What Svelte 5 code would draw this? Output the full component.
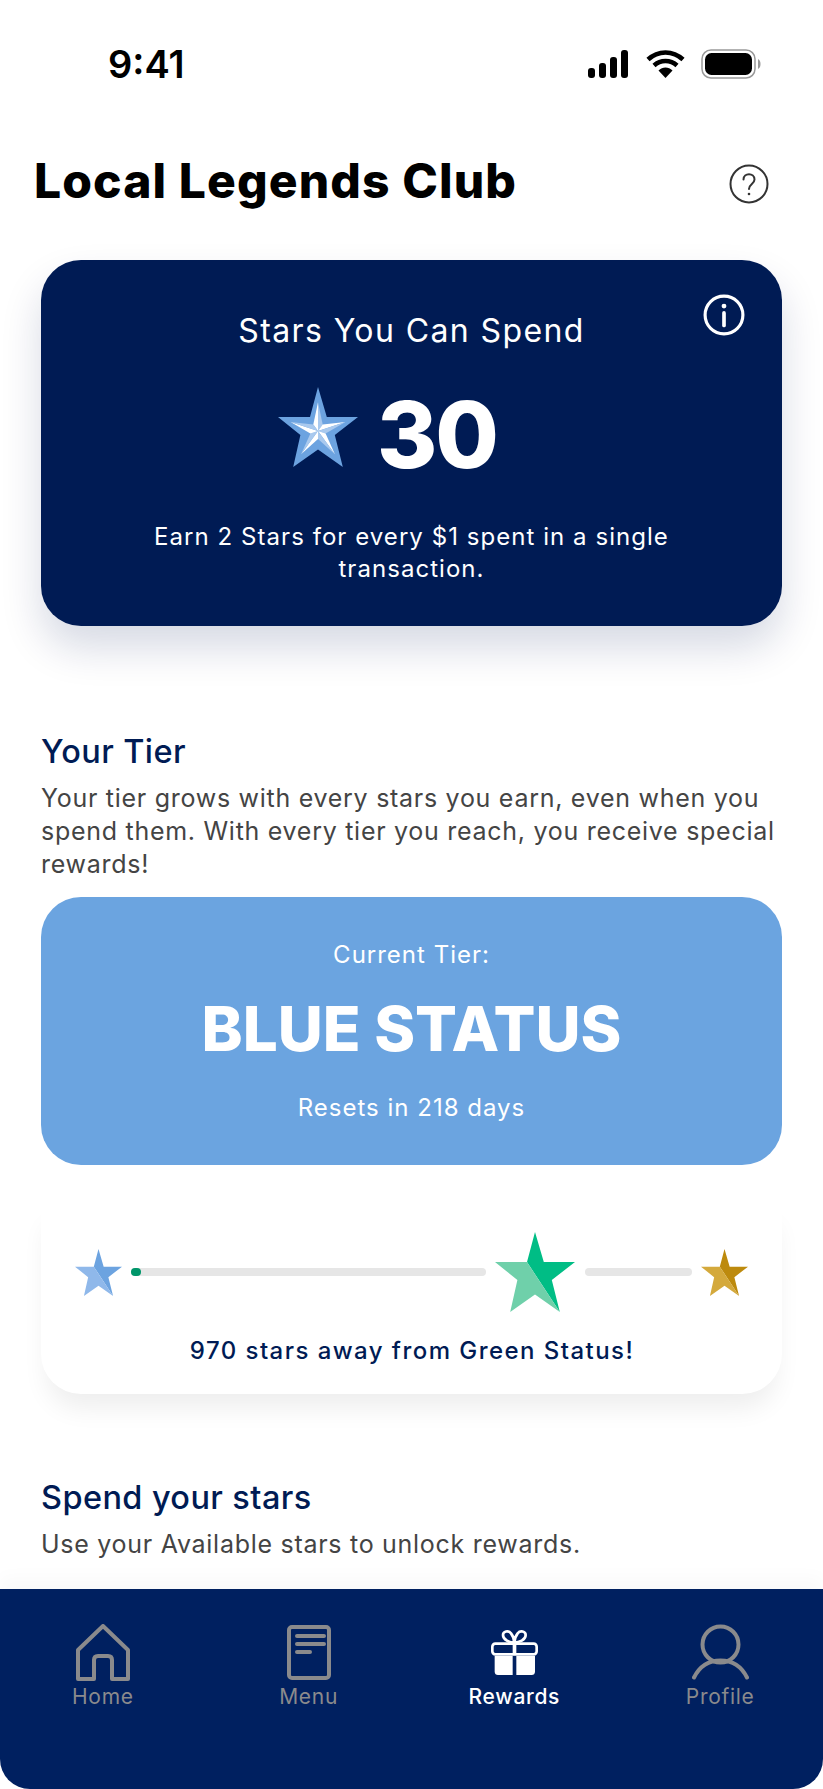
<script>
	const tiers = {
		blue: { dark: '#6ca3e0', light: '#8fb8ea' },
		green: { dark: '#00bd85', light: '#6fd0aa' },
		gold: { dark: '#bd8a0d', light: '#d4a93c' }
	};

	// facets of the white star inside the balance badge
	const cx = 50;
	const cy = 55;
	const facets = [];
	for (let i = 0; i < 5; i++) {
		const a = (-90 + i * 72) * (Math.PI / 180);
		const left = a - (36 * Math.PI) / 180;
		const right = a + (36 * Math.PI) / 180;
		const tip = [cx + 36 * Math.cos(a), cy + 36 * Math.sin(a)];
		const l = [cx + 10 * Math.cos(left), cy + 10 * Math.sin(left)];
		const r = [cx + 10 * Math.cos(right), cy + 10 * Math.sin(right)];
		facets.push({ fill: '#ffffff', points: `${cx},${cy} ${l} ${tip}` });
		facets.push({ fill: '#a9c9ee', points: `${cx},${cy} ${tip} ${r}` });
	}
</script>

{#snippet star(tier, cls)}
	<svg class={cls} viewBox="0 0 100 100">
		<polygon fill={tiers[tier].dark} points="50,0 61,37.5 100,37.5 71,60 81,100 40,37.5" />
		<polygon fill={tiers[tier].light} points="40,37.5 81,100 50,78 19,100 28,60 0,37.5" />
	</svg>
{/snippet}

<div class="page">
	<div class="status">
		<span class="time">9:41</span>
		<div class="status-icons">
			<svg width="42" height="28" viewBox="0 0 42 28">
				<rect x="0" y="18" width="7" height="10" rx="3" />
				<rect x="11" y="13" width="7" height="15" rx="3" />
				<rect x="22" y="7" width="7" height="21" rx="3" />
				<rect x="33" y="0" width="7" height="28" rx="3" />
			</svg>
			<svg width="39" height="28" viewBox="0 0 39 28">
				<path d="M2 9.5C12 0 27 0 37 9.5M8 15.5C14.500 9.500 24.500 9.500 31 15.500" fill="none" stroke="#000" stroke-width="4.500" />
				<path d="M12.500 20.500C16.500 16.500 22.500 16.500 26.500 20.500L19.500 28Z" />
			</svg>
			<svg width="60" height="30" viewBox="0 0 60 30">
				<rect x="1" y="1" width="53" height="28" rx="9" fill="#fff" stroke="#999" stroke-width="1.500" />
				<rect x="4" y="4" width="47" height="22" rx="6.500" />
				<path d="M57 10C59 11 59.500 13 59.500 15C59.500 17 59 19 57 20Z" fill="#999" />
			</svg>
		</div>
	</div>

	<header class="title-row">
		<h1>Local Legends Club</h1>
		<svg class="help" viewBox="0 0 40 40" fill="none" stroke="#333" stroke-width="2">
			<circle cx="20" cy="20" r="18.500" />
			<path d="M14.500 15.500C14.500 8.500 25.500 8.500 25.500 15.500C25.500 20 20 20 20 25" stroke-linecap="round" />
			<circle cx="20" cy="30" r="1.300" fill="#333" stroke="none" />
		</svg>
	</header>

	<section class="balance">
		<svg class="info" viewBox="0 0 40 40" fill="none" stroke="#fff" stroke-width="3">
			<circle cx="20" cy="20" r="18" />
			<path d="M20 18V30" stroke-linecap="round" stroke-width="3.500" />
			<circle cx="20" cy="11.500" r="2.300" fill="#fff" stroke="none" />
		</svg>
		<h2>Stars You Can Spend</h2>
		<div class="amount">
			<svg class="badge" viewBox="0 0 100 100">
				<polygon fill="#6ca3e0" points="50,0 61,37.500 100,37.500 71,60 81,100 50,78 19,100 28,60 0,37.500 40,37.500" />
				{#each facets as f}
					<polygon fill={f.fill} points={f.points} />
				{/each}
			</svg>
			<span>30</span>
		</div>
		<p>Earn 2 Stars for every $1 spent in a single transaction.</p>
	</section>

	<section class="tier">
		<h3>Your Tier</h3>
		<p>Your tier grows with every stars you earn, even when you spend them. With every tier you reach, you receive special rewards!</p>
		<div class="tier-card">
			<div class="tier-small">Current Tier:</div>
			<div class="tier-name">BLUE STATUS</div>
			<div class="tier-small">Resets in 218 days</div>
		</div>
	</section>

	<section class="progress">
		<div class="track-row">
			{@render star('blue', 'star-s')}
			<div class="track first"><span class="dot"></span></div>
			{@render star('green', 'star-l')}
			<div class="track second"></div>
			{@render star('gold', 'star-s')}
		</div>
		<div class="away">970 stars away from Green Status!</div>
	</section>

	<section class="spend">
		<h3>Spend your stars</h3>
		<p>Use your Available stars to unlock rewards.</p>
	</section>

	<nav class="tabbar">
		<div class="tab">
			<svg width="54" height="57" viewBox="0 0 54 57" fill="none" stroke="#8a8a8c" stroke-width="4" stroke-linejoin="round">
				<path d="M27 2L52 26V55H36V36C36 33 34 32 32 32H22C20 32 18 33 18 36V55H2V26Z" />
			</svg>
			<span>Home</span>
		</div>
		<div class="tab">
			<svg width="44" height="55" viewBox="0 0 44 55" fill="none" stroke="#8a8a8c" stroke-width="4" stroke-linecap="round">
				<rect x="2" y="2" width="40" height="51" rx="3" />
				<path d="M10 11H37M10 19H37M10 27H23" />
			</svg>
			<span>Menu</span>
		</div>
		<div class="tab active">
			<svg width="47" height="45" viewBox="0 0 141 135">
				<g fill="none" stroke="#fff" stroke-width="8">
					<rect x="4" y="41" width="133" height="32" rx="9" />
					<path d="M70 38C56 38 36 30 36 15C36 4 52 0 60 10C66 18 70 28 70 38C70 28 74 18 80 10C88 0 104 4 104 15C104 30 84 38 70 38Z" />
				</g>
				<rect x="65" y="40" width="11" height="34" fill="#fff" />
				<path d="M11 78H65V135H21C15 135 11 131 11 125ZM76 78H132V125C132 131 128 135 122 135H76Z" fill="#fff" />
			</svg>
			<span>Rewards</span>
		</div>
		<div class="tab">
			<svg width="57" height="56" viewBox="0 0 57 56" fill="none" stroke="#8a8a8c" stroke-width="4" stroke-linecap="round">
				<circle cx="28.500" cy="20" r="18" />
				<path d="M2 53C8 41 18 36 28.500 36C39 36 49 41 55 53" />
			</svg>
			<span>Profile</span>
		</div>
	</nav>
</div>

<style>
	:global(body) {
		margin: 0;
		background: #fff;
	}

	.page {
		width: 823px;
		height: 1789px;
		overflow: hidden;
		display: flex;
		flex-direction: column;
		font-family: Inter, 'Liberation Sans', sans-serif;
		background: #fff;
	}

	.status {
		display: flex;
		justify-content: space-between;
		align-items: center;
		height: 28px;
		padding: 50px 62px 0 108px;
	}

	.time {
		font-size: 38px;
		font-weight: 600;
		color: #000;
	}

	.status-icons {
		display: flex;
		align-items: center;
		gap: 16px;
	}

	.title-row {
		display: flex;
		justify-content: space-between;
		align-items: center;
		padding: 72px 54px 0 34px;
		height: 60px;
	}

	h1 {
		margin: 0;
		font-size: 48px;
		font-weight: 800;
		color: #000;
		letter-spacing: 1.1px;
	}

	.help {
		width: 40px;
		height: 40px;
		margin-top: 8px;
	}

	.balance {
		position: relative;
		margin: 50px 41px 0;
		height: 366px;
		box-sizing: border-box;
		padding-top: 50px;
		background: #001b54;
		border-radius: 40px;
		color: #fff;
		text-align: center;
		box-shadow: 0 22px 40px rgba(0, 27, 84, 0.16);
	}

	.info {
		position: absolute;
		top: 34px;
		right: 37px;
		width: 42px;
		height: 42px;
	}

	.balance h2 {
		margin: 0;
		font-size: 32px;
		line-height: 42px;
		font-weight: 400;
		letter-spacing: 1.4px;
	}

	.amount {
		display: flex;
		justify-content: center;
		align-items: center;
		gap: 19px;
		margin-top: 41px;
		height: 84px;
		padding-right: 48px;
	}

	.badge {
		width: 80px;
		height: 80px;
		margin-bottom: 16px;
	}

	.amount span {
		font-size: 92px;
		line-height: 84px;
		font-weight: 800;
		letter-spacing: -2px;
	}

	.balance p {
		margin: 44px 70px 0;
		font-size: 24px;
		line-height: 32px;
		letter-spacing: 1.05px;
	}

	.tier {
		padding: 0 41px;
		margin-top: 104px;
	}

	h3 {
		margin: 0;
		font-size: 32.500px;
		line-height: 44px;
		font-weight: 500;
		letter-spacing: 0.4px;
		color: #001b54;
	}

	.tier p,
	.spend p {
		margin: 8px 0 0;
		font-size: 25px;
		line-height: 33px;
		letter-spacing: 0.72px;
		color: #444;
	}

	.tier p {
		width: 745px;
	}

	.tier-card {
		margin-top: 16px;
		height: 268px;
		box-sizing: border-box;
		padding-top: 42px;
		border-radius: 40px;
		background: #6ba4e0;
		color: #fff;
		text-align: center;
	}

	.tier-small {
		font-size: 24px;
		line-height: 32px;
		letter-spacing: 1px;
	}

	.tier-name {
		margin: 20px 0 25px;
		font-size: 62px;
		line-height: 76px;
		font-weight: 800;
	}

	.progress {
		margin: 36px 41px 0;
		height: 193px;
		box-sizing: border-box;
		padding: 31px 33px 0 34px;
		border-radius: 0 0 40px 40px;
		background: #fff;
		box-shadow: 0 20px 26px -6px rgba(0, 0, 0, 0.07);
	}

	.track-row {
		display: flex;
		align-items: center;
		height: 80px;
	}

	.star-s {
		flex: none;
		width: 47px;
		height: 47px;
	}

	.star-l {
		flex: none;
		width: 80px;
		height: 80px;
		margin: 0 10px 0 9px;
	}

	.track {
		height: 8px;
		border-radius: 4px;
		background: #e6e6e6;
	}

	.first {
		flex: 0 0 355px;
		margin-left: 9px;
	}

	.second {
		flex: 0 0 107px;
		margin-right: 9px;
	}

	.dot {
		display: block;
		width: 10px;
		height: 8px;
		border-radius: 4px;
		background: #00966a;
	}

	.away {
		margin-top: 23px;
		text-align: center;
		font-size: 24px;
		line-height: 32px;
		font-weight: 500;
		letter-spacing: 1.45px;
		color: #001b54;
	}

	.spend {
		padding: 0 41px;
		margin-top: 82px;
	}

	.tabbar {
		margin-top: auto;
		flex: none;
		height: 200px;
		box-sizing: border-box;
		padding-top: 35px;
		display: grid;
		grid-template-columns: repeat(4, 1fr);
		background: #002060;
		border-radius: 0 0 30px 30px;
		box-shadow: 0 -12px 18px rgba(0, 0, 0, 0.025);
	}

	.tab {
		display: flex;
		flex-direction: column;
		align-items: center;
		height: 90px;
		color: #8a8a8c;
		font-size: 21px;
	}

	.tab svg {
		display: block;
		height: 57px;
		flex: none;
	}

	.tab span {
		margin-top: 4px;
		line-height: 24px;
		letter-spacing: 0.7px;
	}

	.active {
		color: #fff;
		font-weight: 500;
	}
</style>
